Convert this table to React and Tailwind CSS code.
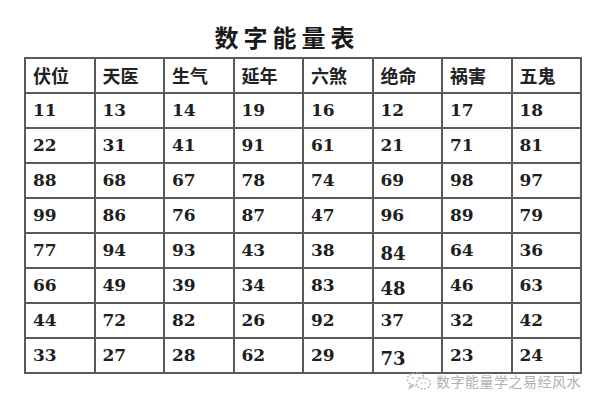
import React from 'react';

const headers = ['伏位', '天医', '生气', '延年', '六煞', '绝命', '祸害', '五鬼'];

const rows = [
    ['11', '13', '14', '19', '16', '12', '17', '18'],
    ['22', '31', '41', '91', '61', '21', '71', '81'],
    ['88', '68', '67', '78', '74', '69', '98', '97'],
    ['99', '86', '76', '87', '47', '96', '89', '79'],
    ['77', '94', '93', '43', '38', '84', '64', '36'],
    ['66', '49', '39', '34', '83', '48', '46', '63'],
    ['44', '72', '82', '26', '92', '37', '32', '42'],
    ['33', '27', '28', '62', '29', '73', '23', '24'],
];

// a few numbers sit lower in the scanned original
const dropped = { '4-5': true, '5-5': true, '7-5': true };

function WeChatMark() {
    return (
        <svg width="26" height="20" viewBox="0 0 26 20" fill="none" stroke="#b5b5b5" strokeWidth="1.4">
            <ellipse cx="10" cy="8" rx="8.5" ry="6.5" strokeDasharray="2 1.5" />
            <path d="M5 13.5 L3.5 17 L8 14.3" />
            <ellipse cx="17.5" cy="12.5" rx="7" ry="5.5" fill="white" strokeDasharray="2 1.5" />
            <circle cx="7" cy="7" r="0.9" fill="#b5b5b5" stroke="none" />
            <circle cx="13" cy="7" r="0.9" fill="#b5b5b5" stroke="none" />
            <circle cx="15.5" cy="12" r="0.8" fill="#b5b5b5" stroke="none" />
            <circle cx="19.5" cy="12" r="0.8" fill="#b5b5b5" stroke="none" />
        </svg>
    );
}

export default function App() {
    return (
        <div className="relative w-[600px] h-[400px] bg-white overflow-hidden">
            {/* title */}
            <div
                className="pt-[22px] pr-[26px] text-center text-[24px] leading-[30px] font-bold tracking-[5px] text-[#1a1a1a]"
                style={{ fontFamily: '"Noto Sans CJK SC", sans-serif' }}
            >
                数字能量表
            </div>

            {/* table */}
            <div className="mt-[5px] ml-[24px] w-[558px] border-2 border-[#5a5a5a] bg-[#5a5a5a] grid grid-cols-8 gap-[2px]">
                {headers.map((h) => (
                    <div
                        key={h}
                        className="h-[33px] bg-white flex items-center pl-[7px] text-[18px] font-bold text-[#222]"
                        style={{ fontFamily: '"Noto Sans CJK SC", sans-serif' }}
                    >
                        {h}
                    </div>
                ))}
                {rows.map((row, r) =>
                    row.map((n, c) => (
                        <div
                            key={r + '-' + c}
                            className="h-[33px] bg-white flex items-center pl-[7px] text-[17px] font-bold text-[#1e1e1e]"
                            style={{ fontFamily: '"DejaVu Serif", serif' }}
                        >
                            <span className={dropped[r + '-' + c] ? 'translate-y-[3px] text-[18px]' : ''}>{n}</span>
                        </div>
                    ))
                )}
            </div>

            {/* watermark */}
            <div className="absolute left-[406px] top-[371px] flex items-center gap-[4px]">
                <WeChatMark />
                <span
                    className="text-[14px] leading-[18px] text-[#b0b0b0] tracking-[0.5px]"
                    style={{ fontFamily: '"Noto Sans CJK SC", sans-serif' }}
                >
                    数字能量学之易经风水
                </span>
            </div>
        </div>
    );
}
